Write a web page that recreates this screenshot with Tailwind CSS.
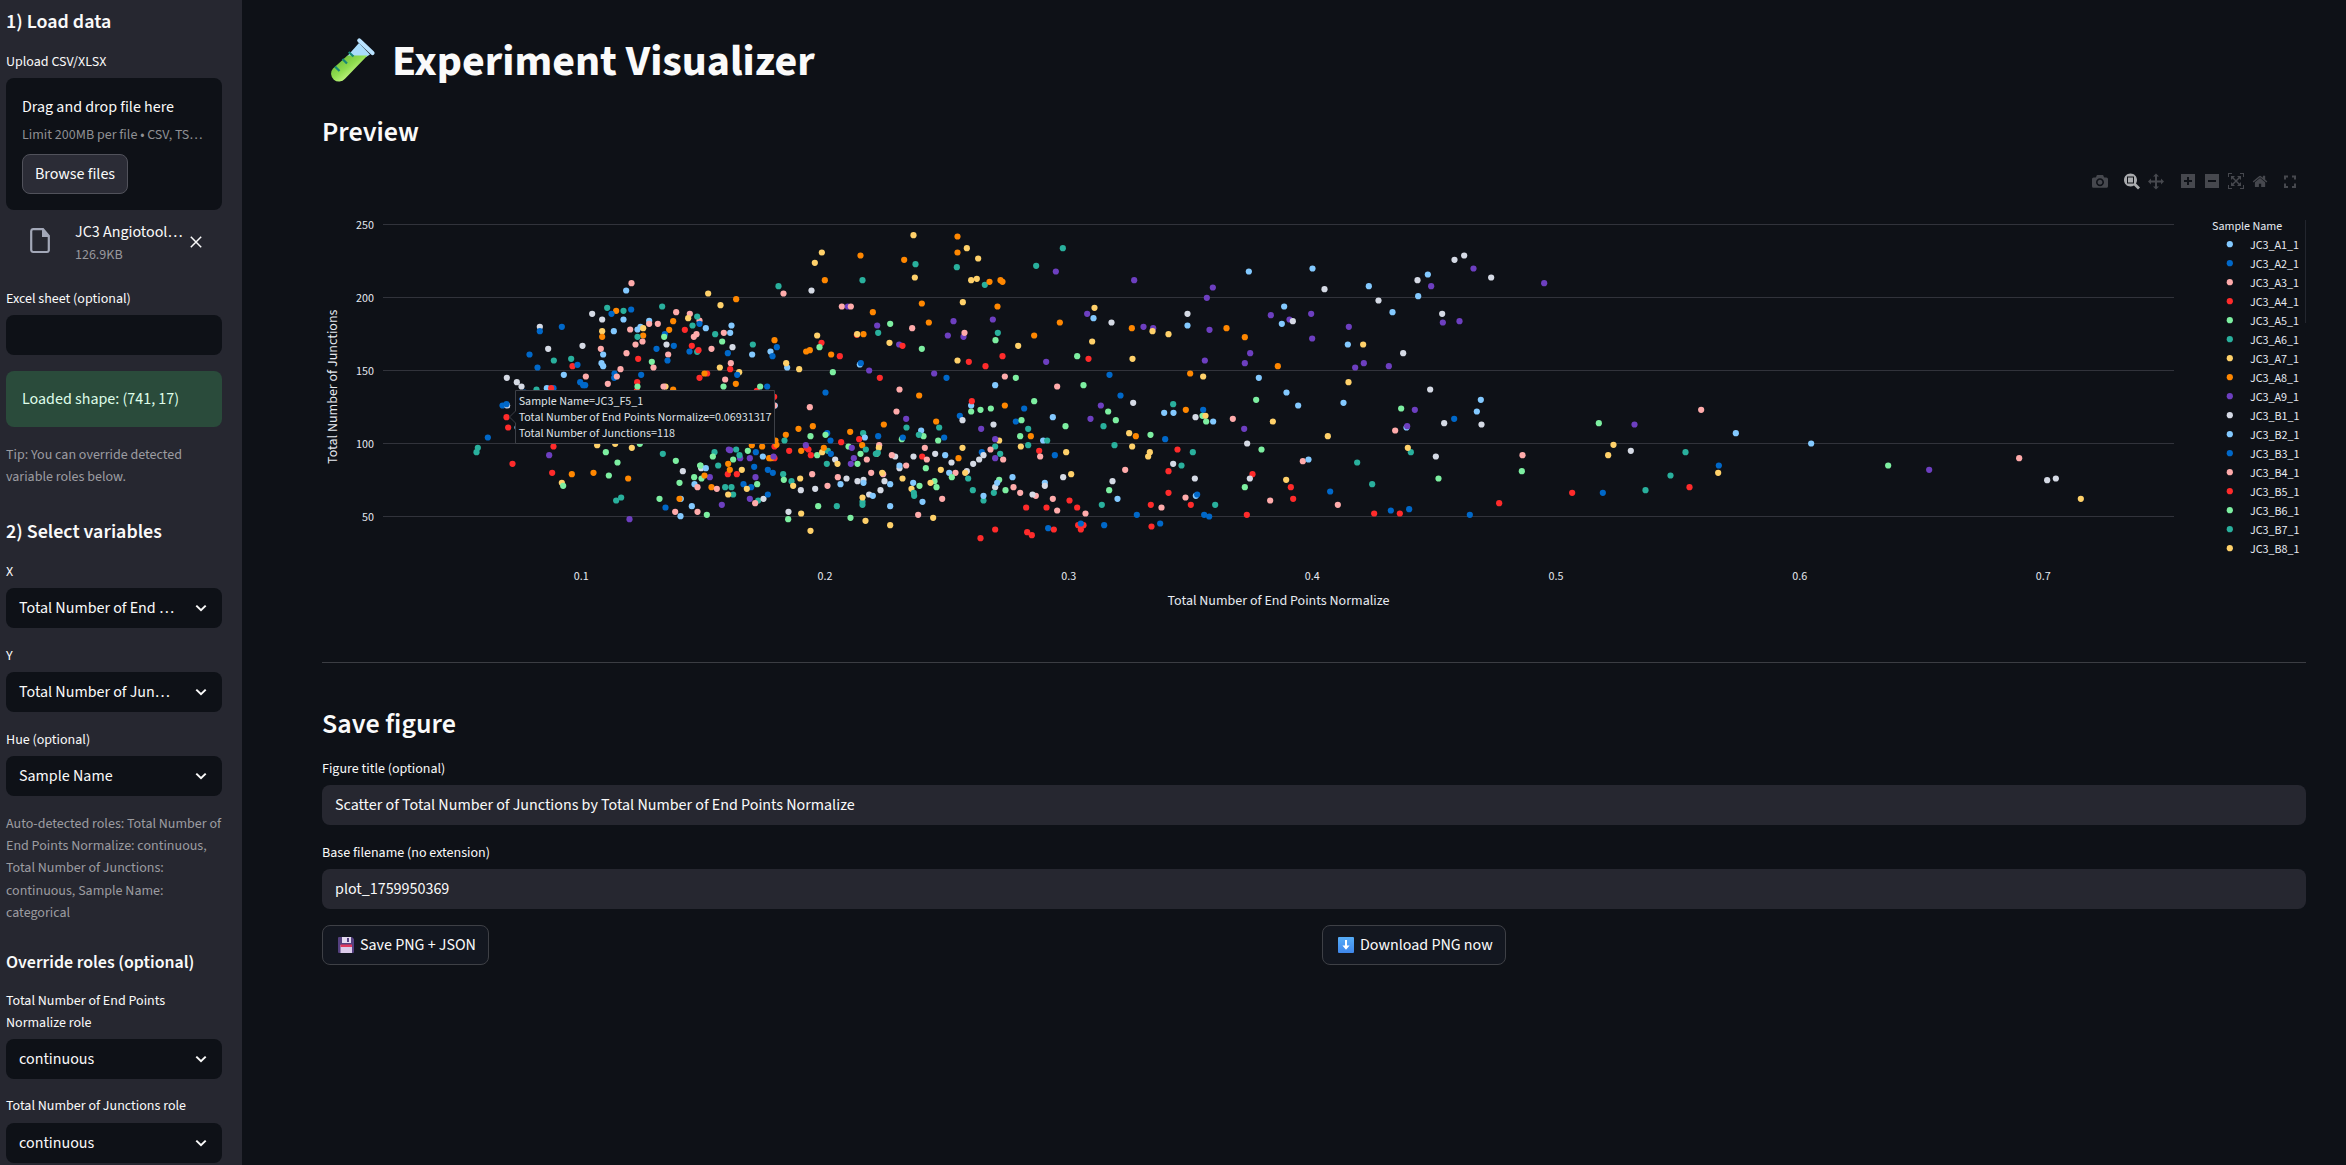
<!DOCTYPE html>
<html lang="en">
<head>
<meta charset="utf-8">
<title>Experiment Visualizer</title>
<script src="https://cdn.jsdelivr.net/npm/@tailwindcss/browser@4"></script>
</head>
<body class="flex h-[1165px] w-[2346px] overflow-hidden bg-[#0e1117] font-['Source_Sans_3','Noto_Sans_CJK_SC',sans-serif] text-[#fafafa]">

<aside class="flex h-full w-[242px] shrink-0 flex-col bg-[#262730] pl-1.5 pr-5 pt-2.5">
  <h3 class="h-6 text-xl leading-6 font-semibold">1) Load data</h3>
  <label class="mt-4 h-6 text-sm leading-6">Upload CSV/XLSX</label>
  <section class="mt-1 flex h-[132px] shrink-0 flex-col items-start rounded-lg bg-[#0e1117] px-4 pt-[17px]">
    <p class="text-base leading-6 whitespace-nowrap">Drag and drop file here</p>
    <p class="mt-1.5 text-sm leading-5 whitespace-nowrap text-[#8f9094]">Limit 200MB per file • CSV, TS…</p>
    <button class="mt-[9px] h-10 w-[106px] rounded-lg border border-[#51525b] bg-[#2b2c36] text-base whitespace-nowrap">Browse files</button>
  </section>
  <div class="flex h-[77px] shrink-0 items-start pt-2.5">
    <svg class="mt-2 ml-6 h-[26px] w-5 shrink-0" viewBox="0 0 20 26" fill="none"><path d="M3 1.2H13L18.8 8V22.5A2 2 0 0 1 17 24H3A2 2 0 0 1 1.2 22.2V3A2 2 0 0 1 3 1.2Z" stroke="#a3a8b8" stroke-width="2.2"/><path d="M12 1V9H19.5Z" fill="#a3a8b8"/></svg>
    <div class="ml-[25px] w-[108px]">
      <p class="text-base leading-6 whitespace-nowrap">JC3 Angiotool…</p>
      <p class="mt-px text-sm leading-5 text-[#98989d]">126.9KB</p>
    </div>
    <svg class="mt-4 ml-[7px] size-3 shrink-0" viewBox="0 0 12 12" stroke="#fafafa" stroke-width="1.5"><path d="M.8 .8 11.2 11.2M11.2 .8 .8 11.2"/></svg>
  </div>
  <label class="h-6 text-sm leading-6">Excel sheet (optional)</label>
  <div class="mt-1 h-10 shrink-0 rounded-lg bg-[#0e1117]"></div>
  <div class="mt-4 flex h-14 shrink-0 items-center rounded-lg bg-[#2a4b3b] px-4 text-base text-[#dffde9]">Loaded shape: (741, 17)</div>
  <p class="mt-4 h-[45px] shrink-0 pt-[.5px] text-sm leading-[22.4px] text-[#9c9ca1]">Tip: You can override detected<br>variable roles below.</p>
  <h3 class="mt-8 h-6 shrink-0 text-xl leading-6 font-semibold">2) Select variables</h3>
  <label class="mt-4 h-6 shrink-0 text-sm leading-6">X</label>
  <div class="mt-1 flex h-10 shrink-0 items-center justify-between rounded-lg bg-[#0e1117] pr-[15px] pl-[13px] text-base whitespace-nowrap"><span>Total Number of End …</span><svg class="h-2 w-3" viewBox="0 0 12 8" fill="none" stroke="#fafafa" stroke-width="2"><path d="M1.3 1.6 6 6.2 10.7 1.6"/></svg></div>
  <label class="mt-4 h-6 shrink-0 text-sm leading-6">Y</label>
  <div class="mt-1 flex h-10 shrink-0 items-center justify-between rounded-lg bg-[#0e1117] pr-[15px] pl-[13px] text-base whitespace-nowrap"><span>Total Number of Jun…</span><svg class="h-2 w-3" viewBox="0 0 12 8" fill="none" stroke="#fafafa" stroke-width="2"><path d="M1.3 1.6 6 6.2 10.7 1.6"/></svg></div>
  <label class="mt-4 h-6 shrink-0 text-sm leading-6">Hue (optional)</label>
  <div class="mt-1 flex h-10 shrink-0 items-center justify-between rounded-lg bg-[#0e1117] pr-[15px] pl-[13px] text-base whitespace-nowrap"><span>Sample Name</span><svg class="h-2 w-3" viewBox="0 0 12 8" fill="none" stroke="#fafafa" stroke-width="2"><path d="M1.3 1.6 6 6.2 10.7 1.6"/></svg></div>
  <p class="mt-4 h-28 shrink-0 pt-[.5px] text-sm leading-[22.4px] whitespace-nowrap text-[#9c9ca1]">Auto-detected roles: Total Number of<br>End Points Normalize: continuous,<br>Total Number of Junctions:<br>continuous, Sample Name:<br>categorical</p>
  <h4 class="mt-[27px] h-[23px] shrink-0 text-[17.9px] leading-[23px] font-semibold">Override roles (optional)</h4>
  <label class="mt-4 h-[45px] shrink-0 text-sm leading-[22.4px]">Total Number of End Points<br>Normalize role</label>
  <div class="mt-1 flex h-10 shrink-0 items-center justify-between rounded-lg bg-[#0e1117] pr-[15px] pl-[13px] text-base whitespace-nowrap"><span>continuous</span><svg class="h-2 w-3" viewBox="0 0 12 8" fill="none" stroke="#fafafa" stroke-width="2"><path d="M1.3 1.6 6 6.2 10.7 1.6"/></svg></div>
  <label class="mt-4 h-6 shrink-0 text-sm leading-[22.4px]">Total Number of Junctions role</label>
  <div class="mt-1 flex h-10 shrink-0 items-center justify-between rounded-lg bg-[#0e1117] pr-[15px] pl-[13px] text-base whitespace-nowrap"><span>continuous</span><svg class="h-2 w-3" viewBox="0 0 12 8" fill="none" stroke="#fafafa" stroke-width="2"><path d="M1.3 1.6 6 6.2 10.7 1.6"/></svg></div>
</aside>

<main class="flex w-[2064px] flex-col pt-[35px] pl-20">
  <h1 class="flex h-[53px] items-start text-[44px] leading-[53px] font-bold whitespace-nowrap">
    <svg class="mt-[2px] mr-[16px] ml-2 h-[46px] w-[46px] shrink-0" viewBox="0 0 46 46">
      <defs><linearGradient id="liq" x1="0" y1="0" x2="1" y2="1"><stop offset="0" stop-color="#5fae2f"/><stop offset=".45" stop-color="#8fdc4f"/><stop offset=".7" stop-color="#c4f584"/></linearGradient></defs>
      <path d="M29 6 40 17.500 36 20H16.500Z" fill="#a9dcfb"/>
      <path d="M17.500 18.500H37.500L15 41.800A7.900 7.900 0 0 1 3 31.500Z" fill="url(#liq)"/>
      <path d="M29.300 3.500 42.500 16" stroke="#b9e2ff" stroke-width="4.200" stroke-linecap="round"/>
      <path d="M18.700 15 23.500 19.500M12.500 22 17 26.500M5 29.500 9.500 34" stroke="#178777" stroke-width="2.200"/>
    </svg>
    <span>Experiment Visualizer</span>
  </h1>
  <h2 class="mt-[27px] h-[34px] text-[28px] leading-[34px] font-semibold">Preview</h2>

  <svg id="chart" class="mt-[11px] h-[480px] w-[1984px] shrink-0" viewBox="322 160 1984 480" fill="#e6eaf1" font-size="12">
    <g id="modebar" fill="#46484e">
      <g transform="translate(2092 187) scale(.016 -.016)"><path d="m500 450c-83 0-150-67-150-150 0-83 67-150 150-150 83 0 150 67 150 150 0 83-67 150-150 150z m400 150h-120c-16 0-34 13-39 29l-31 93c-6 15-23 28-40 28h-340c-16 0-34-13-39-28l-31-94c-6-15-23-28-40-28h-120c-55 0-100-45-100-100v-450c0-55 45-100 100-100h800c55 0 100 45 100 100v450c0 55-45 100-100 100z m-400-550c-138 0-250 112-250 250 0 138 112 250 250 250 138 0 250-112 250-250 0-138-112-250-250-250z"/></g>
      <g transform="translate(2124 187) scale(.016 -.016)" fill="#a9abae"><path d="m1000-25l-250 251c40 63 63 138 63 218 0 224-182 406-407 406-224 0-406-182-406-406s183-406 407-406c80 0 155 22 218 62l250-250 125 125z m-812 250l0 438 437 0 0-438-437 0z m62 375l313 0 0-312-313 0 0 312z"/></g>
      <g transform="translate(2148 187) scale(.016 -.016)"><path d="m1000 350l-187 188 0-125-250 0 0 250 125 0-188 187-187-187 125 0 0-250-250 0 0 125-188-188 186-187 0 125 252 0 0-250-125 0 187-188 188 188-125 0 0 250 250 0 0-126 187 188z"/></g>
      <g transform="translate(2181 186.600) scale(.016 -.016)"><path d="m1 787l0-875 875 0 0 875-875 0z m687-500l-187 0 0-187-125 0 0 187-188 0 0 125 188 0 0 187 125 0 0-187 187 0 0-125z"/></g>
      <g transform="translate(2205 186.600) scale(.016 -.016)"><path d="m0 788l0-876 875 0 0 876-875 0z m688-500l-500 0 0 125 500 0 0-125z"/></g>
      <g transform="translate(2228 186.600) scale(.016 -.016)"><path d="m250 850l-187 0-63 0 0-62 0-188 63 0 0 188 187 0 0 62z m688 0l-188 0 0-62 188 0 0-188 62 0 0 188 0 62-62 0z m-875-938l0 188-63 0 0-188 0-62 63 0 187 0 0 62-187 0z m875 188l0-188-188 0 0-62 188 0 62 0 0 62 0 188-62 0z m-125 188l-1 0-93-94-156 156 156 156 92-93 2 0 0 250-250 0 0-2 93-92-156-156-156 156 94 92 0 2-250 0 0-250 0 0 93 93 157-156-157-156-93 94 0 0 0-250 250 0 0 0-94 93 156 157 156-157-93-93 0 0 250 0 0 250z"/></g>
      <g transform="translate(2252.600 187) scale(.016 -.016)"><path d="m786 296v-267q0-15-11-26t-25-10h-214v214h-143v-214h-214q-15 0-25 10t-11 26v267q0 1 0 2t0 2l321 264 321-264q1-1 1-4z m124 39l-34-41q-5-5-12-6h-2q-7 0-12 3l-386 322-386-322q-7-4-13-4-7 2-12 7l-35 41q-4 5-3 13t6 12l401 334q18 15 42 15t43-15l136-114v109q0 8 5 13t13 5h107q8 0 13-5t5-13v-227l122-102q5-5 6-12t-4-13z"/></g>
      <path d="M2285 179.500V176.500H2288M2292 176.500H2295V179.500M2295 183.500V187H2292M2288 187H2285V183.500" fill="none" stroke="#46484e" stroke-width="2"/>
    </g>
    <g id="grid" stroke="#31333b"><path d="M383 224.500H2174M383 297.500H2174M383 370.500H2174M383 443.500H2174M383 516.500H2174"/></g>
    <g text-anchor="end"><text x="374" y="229">250</text><text x="374" y="302">200</text><text x="374" y="375">150</text><text x="374" y="448">100</text><text x="374" y="521">50</text></g>
    <g text-anchor="middle"><text x="581.300" y="580">0.1</text><text x="825" y="580">0.2</text><text x="1068.700" y="580">0.3</text><text x="1312.300" y="580">0.4</text><text x="1556" y="580">0.5</text><text x="1799.700" y="580">0.6</text><text x="2043.300" y="580">0.7</text>
      <text x="1278.500" y="605" font-size="14">Total Number of End Points Normalize</text>
      <text transform="translate(336.500 386.700) rotate(-90)" font-size="14">Total Number of Junctions</text>
    </g>
    <g id="points"></g>
    <g id="legend"><text x="2212" y="230">Sample Name</text></g>
    <path d="M2305.500 220V323" stroke="#23262e"/>
    <g id="hover"><path d="M515.500 390.500H774.500V443.500H515.500V423L509.500 417 515.500 411Z" fill="#0e1117" stroke="#3d4047"/>
      <g fill="#dfe1e6"><text x="518.700" y="405">Sample Name=JC3_F5_1</text><text x="518.700" y="421">Total Number of End Points Normalize=0.06931317</text><text x="518.700" y="437">Total Number of Junctions=118</text></g>
    </g>
  </svg>

  <hr class="mt-[22px] h-px shrink-0 border-0 bg-[#3b3d43]">
  <h2 class="mt-11 h-[34px] shrink-0 text-[28px] leading-[34px] font-semibold">Save figure</h2>
  <label class="mt-4 h-6 shrink-0 text-sm leading-6">Figure title (optional)</label>
  <div class="mt-1 flex h-10 shrink-0 items-center rounded-lg bg-[#262730] px-[13px] text-base">Scatter of Total Number of Junctions by Total Number of End Points Normalize</div>
  <label class="mt-4 h-6 shrink-0 text-sm leading-6">Base filename (no extension)</label>
  <div class="mt-1 flex h-10 shrink-0 items-center rounded-lg bg-[#262730] px-[13px] text-base">plot_1759950369</div>
  <div class="mt-4 grid grid-cols-2 gap-4">
    <button class="flex h-10 w-[167px] items-center rounded-lg border border-[#3e4046] bg-[#131720] pl-[15px] text-base whitespace-nowrap">
      <svg class="mr-1.5 size-4" viewBox="0 0 16 16"><path d="M0 1A1 1 0 0 1 1 0H14L16 2V15A1 1 0 0 1 15 16H1A1 1 0 0 1 0 15Z" fill="#54407f"/><path d="M4 0H13V6H4Z" fill="#e4daf0"/><path d="M9 1H11V5H9Z" fill="#54407f"/><path d="M2.500 8H14V16H2.500Z" fill="#dccbea"/><path d="M2.500 7.500H14V10H2.500Z" fill="#e0395e"/></svg>
      <span>Save PNG + JSON</span></button>
    <button class="flex h-10 w-[184px] items-center rounded-lg border border-[#3e4046] bg-[#131720] pl-[15px] text-base whitespace-nowrap">
      <svg class="mr-1.5 size-4" viewBox="0 0 16 16"><defs><linearGradient id="dl" x1="0" y1="0" x2="0" y2="1"><stop offset="0" stop-color="#57adf8"/><stop offset="1" stop-color="#3f86ea"/></linearGradient></defs><rect width="16" height="16" rx="1" fill="url(#dl)"/><path d="M7 3H9V8.500H11.600L8 12.800 4.400 8.500H7Z" fill="#fff"/></svg>
      <span>Download PNG now</span></button>
  </div>
</main>

<script>
const NS = 'http://www.w3.org/2000/svg';
const colors = {l:'#83c9ff', b:'#0068c9', p:'#ffabab', r:'#ff2b2b', g:'#7defa1', t:'#29b09d', y:'#ffd16a', o:'#ff8700', v:'#6d3fc0', w:'#d5dae5'};
const make = (tag, attrs, parent) => {
  const el = document.createElementNS(NS, tag);
  for (const k in attrs) el.setAttribute(k, attrs[k]);
  parent.append(el);
  return el;
};
// Each band: x origin, then "colour x y" triples in thirds of a pixel.
const bands = [
[310, `p 964 249,l 948 271,t 891 323,o 918 332,t 940 332,b 963 328,b 904 341,w 846 341,w 876 358,l 940 358,t 1056 319,p 1098 336,p 1139 341,y 1134 354,p 1168 361,t 1161 349,b 1168 371,t 1147 376,o 1089 363,p 1043 371,l 1017 362,p 1017 371,l 991 380,l 982 388,y 999 384,p 960 388,o 999 406,t 982 410,l 911 393,y 876 393,o 876 410,w 689 380,b 689 393,b 755 380,o 1077 389,b 1064 402,g 1062 410,r 1124 389,p 1159 402,p 1151 410,p 997 424,p 976 433,w 1069 433,b 1091 437,r 1145 437,b 1138 454,t 1161 455,r 1165 450,b 1039 446,p 872 446,w 817 437,w 714 446,l 879 463,p 949 459,p 1074 463,b 1072 481,b 658 463,t 783 476,t 731 481,r 787 498,b 802 494,b 682 502,l 874 489,l 879 498,r 984 476,g 1025 485,p 1030 502,p 931 507,l 761 524,p 827 529,b 913 520,b 912 533,p 920 529,b 993 524,w 590 533,w 620 546,w 634 559,r 1168 533,b 810 546,b 819 555,b 825 555,p 893 551,r 980 572,r 981 546,g 982 559,y 1066 559,p 1060 559,o 1089 568,t 679 568,l 710 564,b 730 564,r 723 564,b 643 577,b 577 616,w 591 616,b 589 612,r 589 651,r 594 682,l 622 682,b 533 712,t 503 743,t 499 756,r 607 791,r 730 739,v 717 765,r 726 818,o 785 822,o 850 818,y 755 848,g 759 857,y 861 735,g 887 756,y 915 731,y 965 743,g 989 731,t 1058 761,g 922 787,g 896 826,o 954 835,g 1097 782,w 1118 813,g 1108 848,g 1152 831,l 1153 852,p 1162 861,g 1048 896,l 1112 896,o 1108 896,b 1066 922,l 1145 918,p 1095 935,p 1162 935,l 1111 948,t 918 901,t 933 892,v 958 957,w 1173 804,g 1170 796,g 1174 835`],
[700, `y 24 280,y 61 315,o 108 297,l 17 384,l 94 376,l 90 398,p 71 398,t 45 402,g 66 424,w 97 441,p 34 446,b 83 459,y 59 502,p 92 489,r 90 507,y 117 516,b 111 524,r 21 520,o 13 520,p 75 538,g 70 559,o 107 551,t 158 433,l 156 463,r 170 572,g 180 559,b 201 559,t 235 258,p 250 280,o 223 420,b 230 441,l 211 454,b 217 468,l 261 502,y 258 489,y 297 507,y 344 188,y 365 157,w 334 271,o 374 240,y 351 406,r 364 428,g 358 441,o 318 454,o 329 450,o 393 463,r 419 468,g 398 516,p 425 319,v 443 319,p 452 319,o 481 166,t 487 240,o 518 336,v 531 376,t 534 398,r 470 404,y 471 402,o 490 402,g 570 371,y 568 428,v 597 433,r 607 437,l 479 493,b 482 489,v 507 511,r 539 533,p 598 568,b 376 577,y 640 105,o 612 179,t 646 192,y 644 232,o 665 310,p 636 384,o 686 367,g 665 446,v 702 520,o 657 586,p 329 621,p 589 634,v 618 656,t 619 682,r 222 590,l 224 616,p 222 616,o 708 664,t 717 682,l 663 691,g 670 708,t 656 704,g 605 717,b 608 712,g 714 721,o 551 673,b 534 708,o 450 695,t 489 699,l 494 712,r 477 717,o 486 735,t 497 748,r 423 726,g 445 739,v 455 743,v 461 774,v 452 791,g 472 791,g 481 761,p 500 778,p 537 735,y 536 743,g 530 761,t 533 758,t 527 761,o 338 678,o 295 686,o 257 704,t 253 721,g 331 708,b 381 699,g 376 704,b 391 721,o 226 721,r 223 739,o 229 734,r 267 752,o 303 752,r 319 743,r 325 748,v 317 735,r 332 765,g 351 765,y 366 756,t 383 752,o 371 743,b 392 761,w 405 778,y 412 791,t 380 791,p 336 822,p 413 831,w 439 835,l 421 852,p 382 857,w 345 866,w 302 870,t 274 843,y 279 857,t 249 822,g 251 839,y 300 835,w 472 843,w 490 839,l 490 848,p 513 818,p 549 822,y 546 818,w 553 843,l 570 852,w 541 870,w 507 883,l 518 887,t 487 905,t 487 914,y 487 892,g 354 918,t 410 918,l 570 918,g 451 953,y 496 962,y 570 975,y 331 992,y 303 940,w 265 935,g 264 957,w 585 769,p 575 765,w 598 804,l 598 796,p 618 796,w 640 769,r 666 769,p 680 778,p 674 743,w 705 761,g 677 804,y 607 835,y 722 809,l 639 848,y 634 866,t 641 878,t 642 887,g 658 857,g 703 843,y 691 848,g 709 861,l 667 905,p 726 896,p 654 944,y 699 953,v 86 748,v 90 750,t 108 748,o 155 735,o 186 739,g 143 752,b 167 756,t 43 756,g 38 769,v 120 774,t 118 765,g 99 778,v 149 774,l 188 769,o 207 774,r 223 774,o 213 774,v 220 769,t 54 796,g 1 796,l 17 804,o 84 791,r 83 822,o 89 809,r 110 822,y 125 809,b 162 800,b 203 809,b 218 818,v 166 831,v 29 831,o 13 826,o 34 861,p 50 866,t 75 861,t 94 861,b 130 852,b 153 861,y 140 866,g 171 852,t 99 883,y 84 883,v 149 896,t 174 901,w 190 896,p 165 909,b 203 883,v 65 914,g 20 944`],
[940, `o 52 109,y 80 144,o 52 157,y 114 175,t 50 201,y 93 240,y 110 236,t 134 254,o 148 245,o 181 240,o 187 245,t 288 197,t 368 144,v 347 214,v 582 240,y 68 306,o 172 319,v 40 363,v 158 358,v 23 406,v 70 410,p 73 398,t 173 398,g 166 420,y 234 437,o 282 406,o 359 367,v 441 341,y 463 323,l 460 354,w 514 367,y 456 424,g 411 468,r 445 476,r 187 468,y 52 481,r 86 485,r 136 498,v 318 485,o 575 384,v 610 380,v 639 384,y 637 393,y 685 402,y 577 476,b 19 533,p 194 529,g 227 533,l 165 555,p 351 559,g 430 555,b 508 524,b 541 586,w 579 608,l 93 616,r 95 603,g 93 634,g 121 629,g 152 625,o 194 616,b 252 625,g 282 603,b 59 647,w 67 660,w 160 673,v 123 686,b 227 664,g 244 660,t 264 686,l 338 651,g 376 678,v 451 656,v 482 616,g 504 634,g 527 660,t 490 678,t 699 612,l 672 638,l 700 638,b 675 717,b 12 712,y 177 721,v 165 717,t 165 739,g 240 708,o 272 708,t 264 735,y 242 739,l 309 721,t 321 721,t 523 735,y 567 699,o 587 708,g 631 704,y 576 739,r 712 748,y 67 743,p 151 748,b 125 756,w 130 765,w 117 778,w 99 791,t 180 761,v 165 774,p 189 778,l 15 765,w 34 787,o 55 774,l 27 818,p 46 818,g 35 831,w 80 813,y 75 818,t 84 835,r 297 752,p 300 769,b 344 765,y 378 756,y 629 756,y 624 769,w 699 791,p 555 809,r 685 813,y 393 822,w 369 831,l 217 831,t 98 870,g 177 839,w 165 861,l 171 848,t 161 878,g 196 870,p 220 861,p 240 878,l 314 848,w 314 857,p 287 887,w 277 883,t 130 901,l 130 887,p 338 896,r 388 901,r 258 922,r 319 922,p 351 931,r 411 922,p 436 940,w 517 843,g 507 870,l 532 896,t 485 914,r 632 914,p 664 922,r 685 878,b 590 944,b 492 975,b 324 984,r 341 988,r 165 988,r 261 996,r 275 1005,r 121 1014,r 414 975,r 430 975,r 422 988,b 422 970,r 634 979,b 660 970`],
[1180, `t 4 796,w 22 341,l 22 376,o 30 520,o 17 629,y 69 529,v 98 262,v 80 293,v 88 389,v 74 481,o 139 384,l 206 214,l 397 205,w 433 267,v 272 345,l 312 319,v 328 358,l 305 371,w 338 363,v 393 341,o 194 411,v 396 415,v 210 459,v 194 489,o 293 498,l 236 533,l 319 577,g 228 599,l 354 616,l 490 608,b 69 629,w 46 651,g 67 647,y 76 647,g 78 664,l 99 664,p 158 656,v 192 686,y 278 664,w 201 730,y 443 708,g 244 748,t 38 756,p 368 783,l 385 778,r 217 822,w 209 835,w 44 835,y 318 839,g 194 861,r 332 861,r 339 896,p 270 901,b 450 874,p 473 914,p 16 892,l 47 887,b 51 883,r 32 914,t 105 914,r 200 944,b 72 944,b 87 949,l 566 258,w 595 301,l 637 336,v 506 380,l 503 433,y 549 433,v 551 489,v 525 502,v 626 498,y 505 546,w 669 459,w 712 240,l 743 223,v 753 258,l 714 288,w 786 341,v 788 367,v 838 363,w 823 179,w 852 166,v 880 205,w 933 232,w 750 568,l 902 599,l 890 634,w 904 673,b 822 656,w 792 669,g 663 625,v 704 629,p 645 691,l 679 682,v 681 678,t 692 756,y 683 743,w 767 769,g 775 835,t 531 787,t 576 852,r 582 940,b 632 931,r 659 940,b 687 927,b 869 944,r 957 909`],
[1480, `v 192 249,p 663 629,g 356 669,v 463 673,l 767 699,l 993 730,y 400 734,w 452 752,y 384 765,p 127 765,g 125 813,t 616 756,b 716 796,y 714 818,t 571 826,t 496 870,r 628 861,r 276 878,b 368 878`],
[1860, `g 84 796,v 207 809,p 477 774,w 561 840,w 587 835,y 662 896`]
];
const points = document.getElementById('points');
for (const [x0, list] of bands)
  for (const item of list.split(',')) {
    const [c, x, y] = item.trim().split(' ');
    make('circle', {cx: (x0 + (+x + .5) / 3).toFixed(2), cy: (200 + (+y + .5) / 3).toFixed(2), r: 3.1, fill: colors[c]}, points);
  }
const legend = document.getElementById('legend');
['A1','A2','A3','A4','A5','A6','A7','A8','A9','B1','B2','B3','B4','B5','B6','B7','B8'].forEach((name, i) => {
  make('circle', {cx: 2229.8, cy: 244.2 + 19 * i, r: 3.1, fill: colors['lbprgtyovw'[i % 10]]}, legend);
  make('text', {x: 2250, y: 249 + 19 * i}, legend).textContent = `JC3_${name}_1`;
});
</script>
</body>
</html>
